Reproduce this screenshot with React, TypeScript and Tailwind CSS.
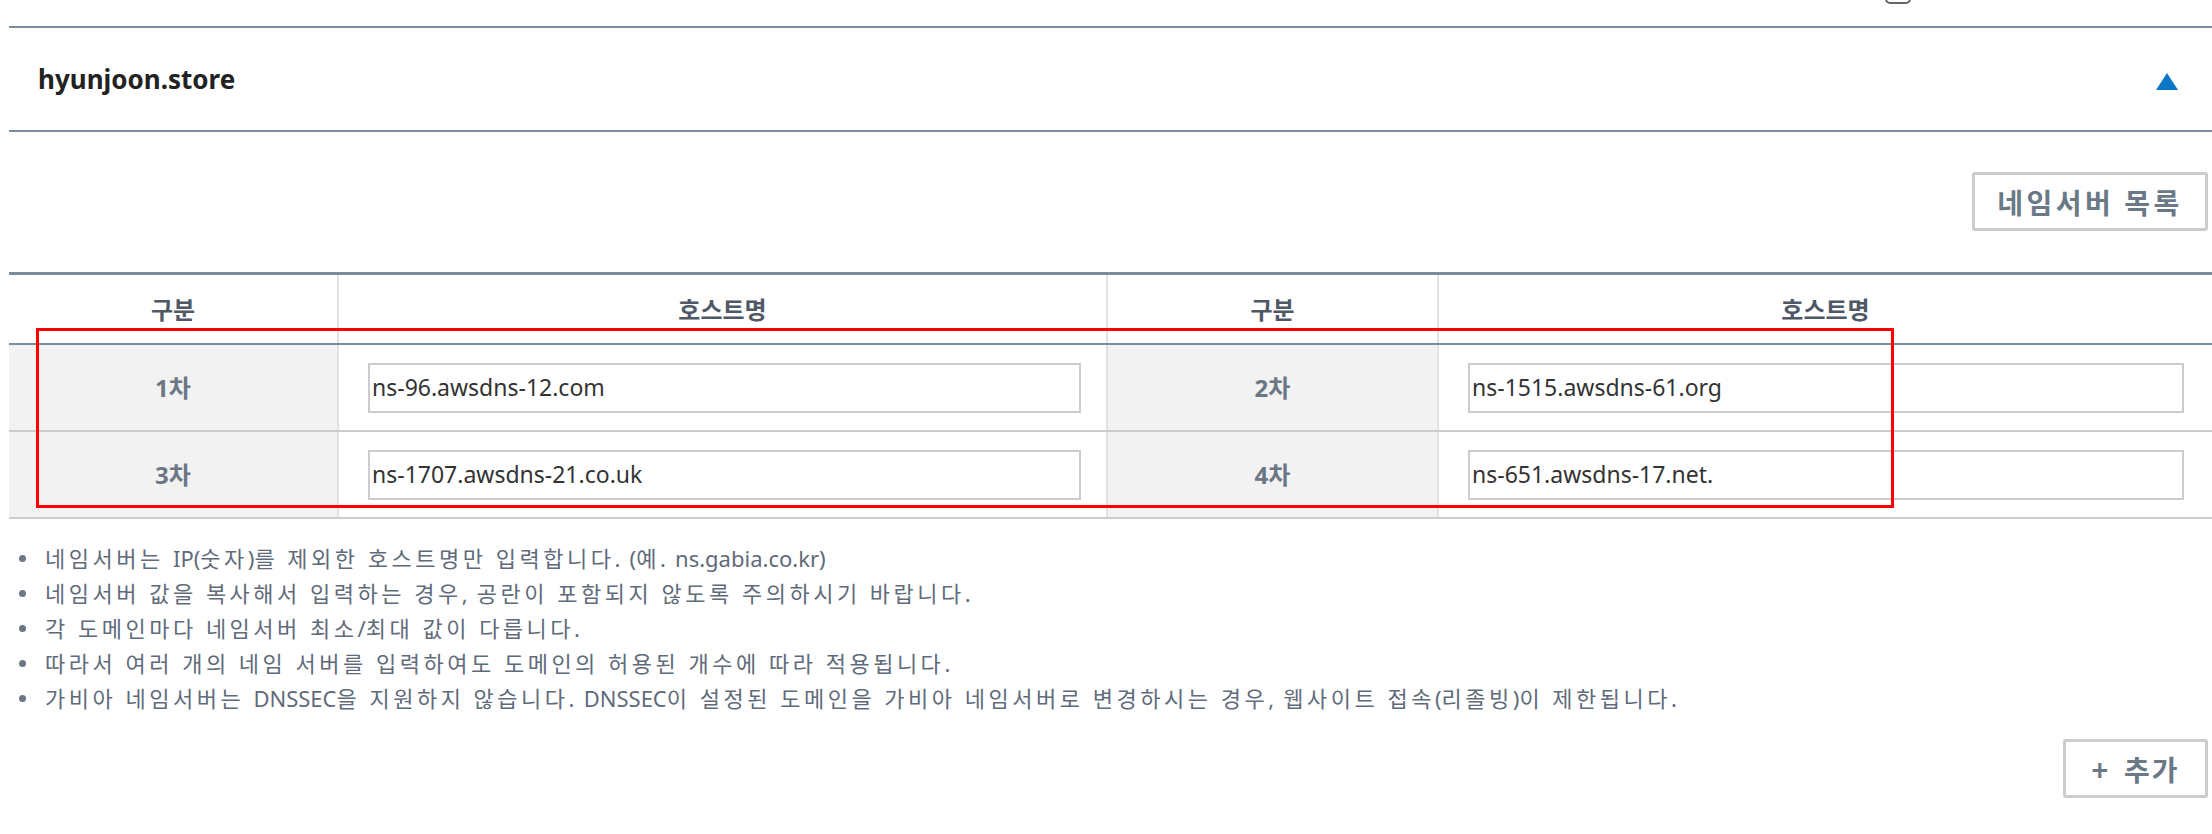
import React from "react";

const rows = [
  [
    { label: "1차", value: "ns-96.awsdns-12.com" },
    { label: "2차", value: "ns-1515.awsdns-61.org" },
  ],
  [
    { label: "3차", value: "ns-1707.awsdns-21.co.uk" },
    { label: "4차", value: "ns-651.awsdns-17.net." },
  ],
];

const notes = [
  "네임서버는 IP(숫자)를 제외한 호스트명만 입력합니다. (예. ns.gabia.co.kr)",
  "네임서버 값을 복사해서 입력하는 경우, 공란이 포함되지 않도록 주의하시기 바랍니다.",
  "각 도메인마다 네임서버 최소/최대 값이 다릅니다.",
  "따라서 여러 개의 네임 서버를 입력하여도 도메인의 허용된 개수에 따라 적용됩니다.",
  "가비아 네임서버는 DNSSEC을 지원하지 않습니다. DNSSEC이 설정된 도메인을 가비아 네임서버로 변경하시는 경우, 웹사이트 접속(리졸빙)이 제한됩니다.",
];

function Note({ text }: { text: string }) {
  const parts = text.split(/([A-Za-z0-9.()\/,\-]+)/);
  return (
    <span>
      {parts.map((p, i) =>
        i % 2 === 1 ? (
          <span key={i} className="tracking-normal">
            {p}
          </span>
        ) : (
          <span key={i}>{p}</span>
        )
      )}
    </span>
  );
}

export default function App() {
  return (
    <div className="relative w-[2212px] h-[834px] bg-white overflow-hidden font-['Noto_Sans','Noto_Sans_CJK_KR',sans-serif]">
      {/* partially visible checkbox from content above */}
      <div className="absolute left-[1885px] top-[-22px] w-[26px] h-[26px] border-2 border-[#666] rounded-[5px]" />

      <div className="pl-[9px] pt-[26px]">
        {/* domain header */}
        <div className="h-[106px] border-t-2 border-b-2 border-[#7b8d9c] flex items-center justify-between pl-[29px] pr-[34px]">
          <span className="text-[26px] font-bold text-[#222] leading-none">hyunjoon.store</span>
          <svg width="22" height="17" viewBox="0 0 22 17" className="mt-[4px]">
            <polygon points="11,0 22,17 0,17" fill="#0a76c8" />
          </svg>
        </div>

        {/* name server list button */}
        <div className="flex justify-end mt-[40px] pr-[4px]">
          <button className="h-[59px] w-[236px] border-[3px] border-[#cccccc] rounded-[3px] bg-white text-[28px] font-bold text-[#6b7886] font-['Noto_Sans_CJK_KR',sans-serif] tracking-[3.5px]">
            네임서버 목록
          </button>
        </div>

        {/* table */}
        <div className="mt-[41px] border-t-[3px] border-[#7b8d9c]">
          <div className="grid grid-cols-[330px_769px_331px_1fr] h-[70px] border-b-2 border-[#7b8d9c] text-[24px] font-bold text-[#4f5966] font-['Noto_Sans_CJK_KR',sans-serif]">
            <div className="flex items-center justify-center border-r-2 border-[#e2e2e2]">구분</div>
            <div className="flex items-center justify-center border-r-2 border-[#e2e2e2]">호스트명</div>
            <div className="flex items-center justify-center border-r-2 border-[#e2e2e2]">구분</div>
            <div className="flex items-center justify-center">호스트명</div>
          </div>
          {rows.map((row, i) => (
            <div
              key={i}
              className="grid grid-cols-[330px_769px_331px_1fr] h-[87px] border-b-2 border-[#cccccc]"
            >
              {row.map((cell, j) => (
                <React.Fragment key={j}>
                  <div className="flex items-center justify-center bg-[#f2f2f2] border-r-2 border-[#e2e2e2] text-[24px] font-bold text-[#6b7785] font-['Noto_Sans','Noto_Sans_CJK_KR',sans-serif]">
                    {cell.label}
                  </div>
                  <div
                    className={
                      j === 0
                        ? "flex items-center pl-[29px] pr-[25px] border-r-2 border-[#e2e2e2]"
                        : "flex items-center pl-[29px] pr-[28px]"
                    }
                  >
                    <div className="w-full h-[50px] border-2 border-[#cccccc] flex items-center pl-[2px] text-[23px] text-[#333] bg-white">
                      {cell.value}
                    </div>
                  </div>
                </React.Fragment>
              ))}
            </div>
          ))}
        </div>

        {/* notes */}
        <ul className="mt-[22px] text-[22px] leading-[35px] text-[#5f6b7b] tracking-[3.5px]">
          {notes.map((n, i) => (
            <li key={i} className="flex items-center">
              <span className="w-[7px] h-[7px] rounded-full bg-[#6b7785] ml-[10px] mr-[19px] shrink-0" />
              <Note text={n} />
            </li>
          ))}
        </ul>

        {/* add button */}
        <div className="flex justify-end mt-[23px] pr-[4px]">
          <button className="h-[59px] w-[145px] border-[3px] border-[#cccccc] rounded-[3px] bg-white text-[28px] font-bold text-[#6b7886] font-['Noto_Sans_CJK_KR',sans-serif] flex items-center justify-center gap-[14px] tracking-[2px]">
            <span>+</span>
            <span>추가</span>
          </button>
        </div>
      </div>

      {/* red annotation rectangle */}
      <div className="absolute left-[36px] top-[328px] w-[1858px] h-[180px] border-[3px] border-[#ff0000] pointer-events-none" />
    </div>
  );
}
